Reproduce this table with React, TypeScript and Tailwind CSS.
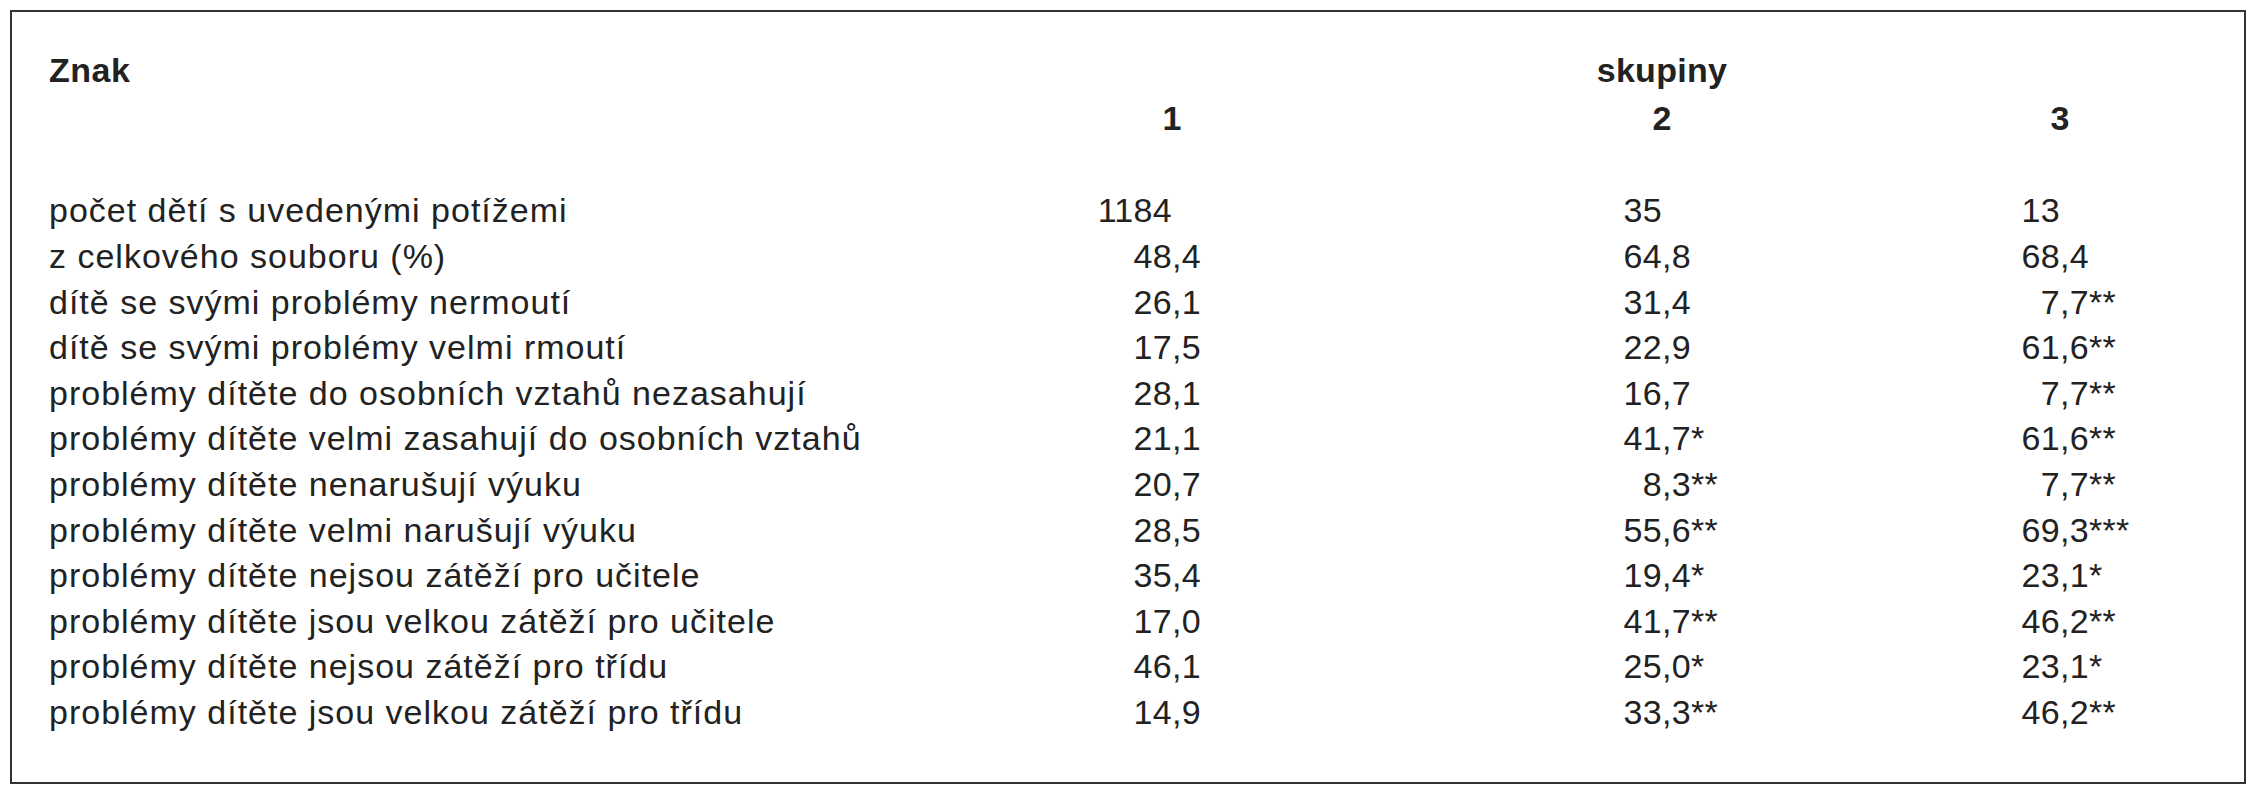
const rows: [string, string, string, string][] = [
  ['počet dětí s uvedenými potížemi', '1184', '35', '13'],
  ['z celkového souboru (%)', '48,4', '64,8', '68,4'],
  ['dítě se svými problémy nermoutí', '26,1', '31,4', '7,7**'],
  ['dítě se svými problémy velmi rmoutí', '17,5', '22,9', '61,6**'],
  ['problémy dítěte do osobních vztahů nezasahují', '28,1', '16,7', '7,7**'],
  ['problémy dítěte velmi zasahují do osobních vztahů', '21,1', '41,7*', '61,6**'],
  ['problémy dítěte nenarušují výuku', '20,7', '8,3**', '7,7**'],
  ['problémy dítěte velmi narušují výuku', '28,5', '55,6**', '69,3***'],
  ['problémy dítěte nejsou zátěží pro učitele', '35,4', '19,4*', '23,1*'],
  ['problémy dítěte jsou velkou zátěží pro učitele', '17,0', '41,7**', '46,2**'],
  ['problémy dítěte nejsou zátěží pro třídu', '46,1', '25,0*', '23,1*'],
  ['problémy dítěte jsou velkou zátěží pro třídu', '14,9', '33,3**', '46,2**'],
];

// integer part right-aligned so the decimal commas line up
function Value({ v }: { v: string }) {
  const [whole, frac] = v.split(',');
  return (
    <div className="flex tracking-[0.3px]">
      <span className="inline-block w-[100px] text-right">{whole}</span>
      {frac !== undefined && <span>,{frac}</span>}
    </div>
  );
}

function Centered({ children }: { children: React.ReactNode }) {
  return <div className="w-[200px] text-center font-bold tracking-[0.3px]">{children}</div>;
}

export default function App() {
  return (
    <div className="min-h-screen bg-white pl-[10px] pt-[10px] text-[#222] font-['Liberation_Sans',Arial,sans-serif] text-[34px]">
      <div className="w-[2236px] h-[774px] border-2 border-[#333] pl-[37px] pt-[36.4px]">
        <div className="flex leading-[45.6px]">
          <div className="w-[1023px] font-bold tracking-[0.5px]">Znak</div>
          <div className="w-[490px]"></div>
          <div className="w-[398px]">
            <Centered>skupiny</Centered>
          </div>
        </div>
        <div className="flex leading-[45.6px] mt-[2.4px] mb-[46.4px]">
          <div className="w-[1023px]"></div>
          <div className="w-[490px]">
            <Centered>1</Centered>
          </div>
          <div className="w-[398px]">
            <Centered>2</Centered>
          </div>
          <div className="flex-1">
            <Centered>3</Centered>
          </div>
        </div>
        {rows.map((r) => (
          <div key={r[0]} className="flex leading-[45.6px]">
            <div className="w-[1023px] whitespace-nowrap tracking-[1px]">{r[0]}</div>
            <div className="w-[490px]">
              <Value v={r[1]} />
            </div>
            <div className="w-[398px]">
              <Value v={r[2]} />
            </div>
            <div className="flex-1">
              <Value v={r[3]} />
            </div>
          </div>
        ))}
      </div>
    </div>
  );
}
